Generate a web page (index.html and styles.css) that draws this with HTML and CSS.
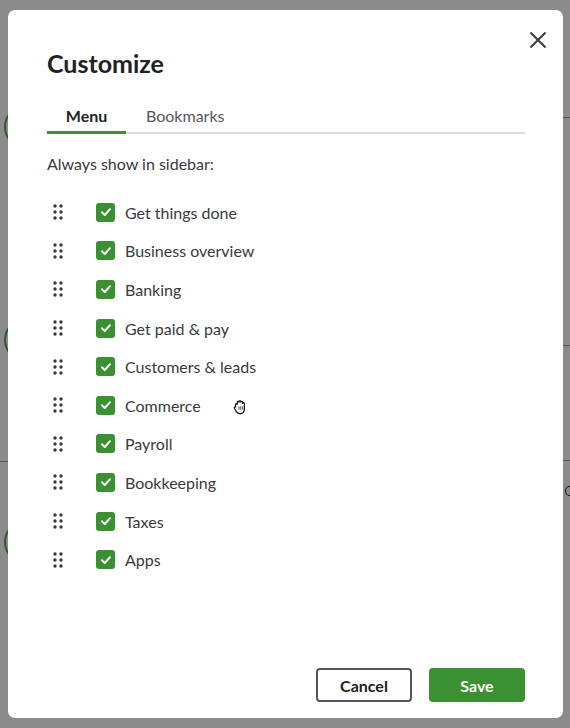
FILE: index.html
```html
<!DOCTYPE html>
<html>
	<head>
		<meta charset="utf-8" />
		<meta name="viewport" content="width=device-width, initial-scale=1" />
		<title>Customize</title>
		<link rel="stylesheet" href="styles.css">
	</head>

	<body>
		<div class="backdrop">
			<span class="ghost ghost-arc a1"></span>
			<span class="ghost ghost-arc a2"></span>
			<span class="ghost ghost-arc a3"></span>
			<span class="ghost ghost-line l1"></span>
			<span class="ghost ghost-line l2"></span>
			<span class="ghost ghost-line l3"></span>
			<span class="ghost ghost-line l4"></span>
			<span class="ghost ghost-ring"></span>

			<section class="modal">
				<button class="close" aria-label="Close">
					<svg width="18" height="18" viewBox="0 0 18 18"><path d="M1.5 1.5L16.5 16.5M16.5 1.5L1.5 16.5" stroke="#393a3d" stroke-width="2" fill="none"/></svg>
				</button>
				<h1>Customize</h1>
				<nav class="tabs">
					<a class="tab active">Menu</a>
					<a class="tab">Bookmarks</a>
				</nav>
				<p class="hint">Always show in sidebar:</p>
				<ul class="items"></ul>
				<footer>
					<button class="btn cancel">Cancel</button>
					<button class="btn save">Save</button>
				</footer>
				<svg class="grab" width="18" height="18" viewBox="0 0 18 18">
					<path d="M3.5 8.5V6.5C3.5 5.5 5.2 5.5 5.2 6.5V4.2C5.2 3.2 7 3.2 7 4.2V3.6C7 2.6 8.8 2.6 8.8 3.6V4.2C8.8 3.2 10.6 3.2 10.6 4.2V5.6C10.6 4.6 12.4 4.6 12.4 5.6V10.5C12.4 13.4 10.9 15.6 8.4 15.6H7.4C5.4 15.6 4.4 14.2 3.6 12.5L2.4 10.2C1.9 9.1 3.3 8.3 4 9.3" fill="#fff" stroke="#111" stroke-width="1.2" stroke-linejoin="round"/>
					<path d="M7 8.5V11.5M8.8 8.5V11.5M10.6 8.5V11.5" stroke="#444" stroke-width="1"/>
				</svg>
			</section>
		</div>

		<script>
			"use strict";
			var items = ["Get things done", "Business overview", "Banking", "Get paid & pay",
				"Customers & leads", "Commerce", "Payroll", "Bookkeeping", "Taxes", "Apps"];

			var handle = '<svg width="10" height="16" viewBox="0 0 10 16">' +
				'<g fill="#393a3d"><circle cx="2" cy="2" r="1.7"/><circle cx="8" cy="2" r="1.7"/>' +
				'<circle cx="2" cy="8" r="1.7"/><circle cx="8" cy="8" r="1.7"/>' +
				'<circle cx="2" cy="14" r="1.7"/><circle cx="8" cy="14" r="1.7"/></g></svg>';
			var check = '<span class="box"><svg width="14" height="14" viewBox="0 0 14 14">' +
				'<path d="M3 7.2L5.8 10L11 4.2" stroke="#fff" stroke-width="2" fill="none" stroke-linecap="round" stroke-linejoin="round"/></svg></span>';

			for (var list = document.querySelector(".items"), i = 0; i < items.length; ++i) {
				var li = list.appendChild(document.createElement("li"));
				li.innerHTML = '<span class="handle">' + handle + '</span>' + check;
				li.appendChild(document.createElement("span")).innerText = items[i];
			}
		</script>
	</body>
</html>
```

FILE: styles.css
```css
body {
	margin: 0;
	padding: 0;
	background: #8b8b8b;
	font-family: Lato, "Open Sans", sans-serif;
	color: #393a3d;
}

.backdrop {
	position: relative;
	height: 728px;
	padding: 10px 7px 10px 8px;
	box-sizing: border-box;
	overflow: hidden;
}

/* faint page behind the overlay */
.ghost {
	position: absolute;
}

.ghost-arc {
	left: 4px;
	width: 40px;
	height: 40px;
	border: 2px solid #2f5a2a;
	border-radius: 50%;
}

.a1 { top: 105px; }
.a2 { top: 318px; }
.a3 { top: 520px; }

.ghost-line {
	height: 1px;
	background: #555;
}

.l1 { left: 0; width: 8px; top: 461px; }
.l2 { right: 0; width: 7px; top: 117px; }
.l3 { right: 0; width: 7px; top: 345px; }
.l4 { right: 0; width: 7px; top: 460px; }

.ghost-ring {
	right: -4px;
	top: 486px;
	width: 7px;
	height: 8px;
	border: 1.5px solid #111;
	border-radius: 50%;
}

.modal {
	position: relative;
	height: 708px;
	background: #fff;
	border-radius: 7px;
	padding: 0 38px 0 39px;
	box-sizing: border-box;
	display: flex;
	flex-direction: column;
}

.close {
	position: absolute;
	top: 21px;
	right: 16px;
	border: 0;
	background: none;
	padding: 0;
	width: 18px;
	height: 18px;
}

h1 {
	margin: 38px 0 0;
	font-size: 25px;
	line-height: 30px;
	font-weight: 700;
	color: #222;
}

.tabs {
	display: flex;
	margin-top: 24px;
	border-bottom: 2px solid #dcdcdc;
}

.tab {
	font-size: 16px;
	line-height: 20px;
	padding: 4px 0 5px;
	margin-bottom: -2px;
	color: #55565a;
}

.tab.active {
	width: 79px;
	text-align: center;
	font-weight: 700;
	color: #222;
	border-bottom: 3px solid #3b9132;
}

.tab + .tab {
	margin-left: 20px;
}

.hint {
	margin: 20px 0 0;
	font-size: 16px;
	line-height: 20px;
	color: #393a3d;
}

.items {
	list-style: none;
	margin: 19px 0 0;
	padding: 0;
}

.items li {
	display: flex;
	align-items: center;
	height: 38.6px;
	font-size: 16px;
}

.handle {
	display: flex;
	width: 49px;
	padding-left: 6px;
	box-sizing: border-box;
}

.box {
	display: flex;
	align-items: center;
	justify-content: center;
	width: 19px;
	height: 19px;
	border-radius: 3px;
	background: #3b9132;
	margin-right: 10px;
}

footer {
	margin-top: auto;
	margin-bottom: 16px;
	display: flex;
	justify-content: flex-end;
	gap: 17px;
}

.btn {
	width: 96px;
	height: 34px;
	border-radius: 4px;
	font-family: Lato, "Open Sans", sans-serif;
	font-size: 16px;
	font-weight: 700;
}

.cancel {
	background: #fff;
	border: 2px solid #55565a;
	color: #222;
}

.save {
	background: #3b9132;
	border: 0;
	color: #fff;
}

.grab {
	position: absolute;
	left: 224px;
	top: 388px;
}
```
